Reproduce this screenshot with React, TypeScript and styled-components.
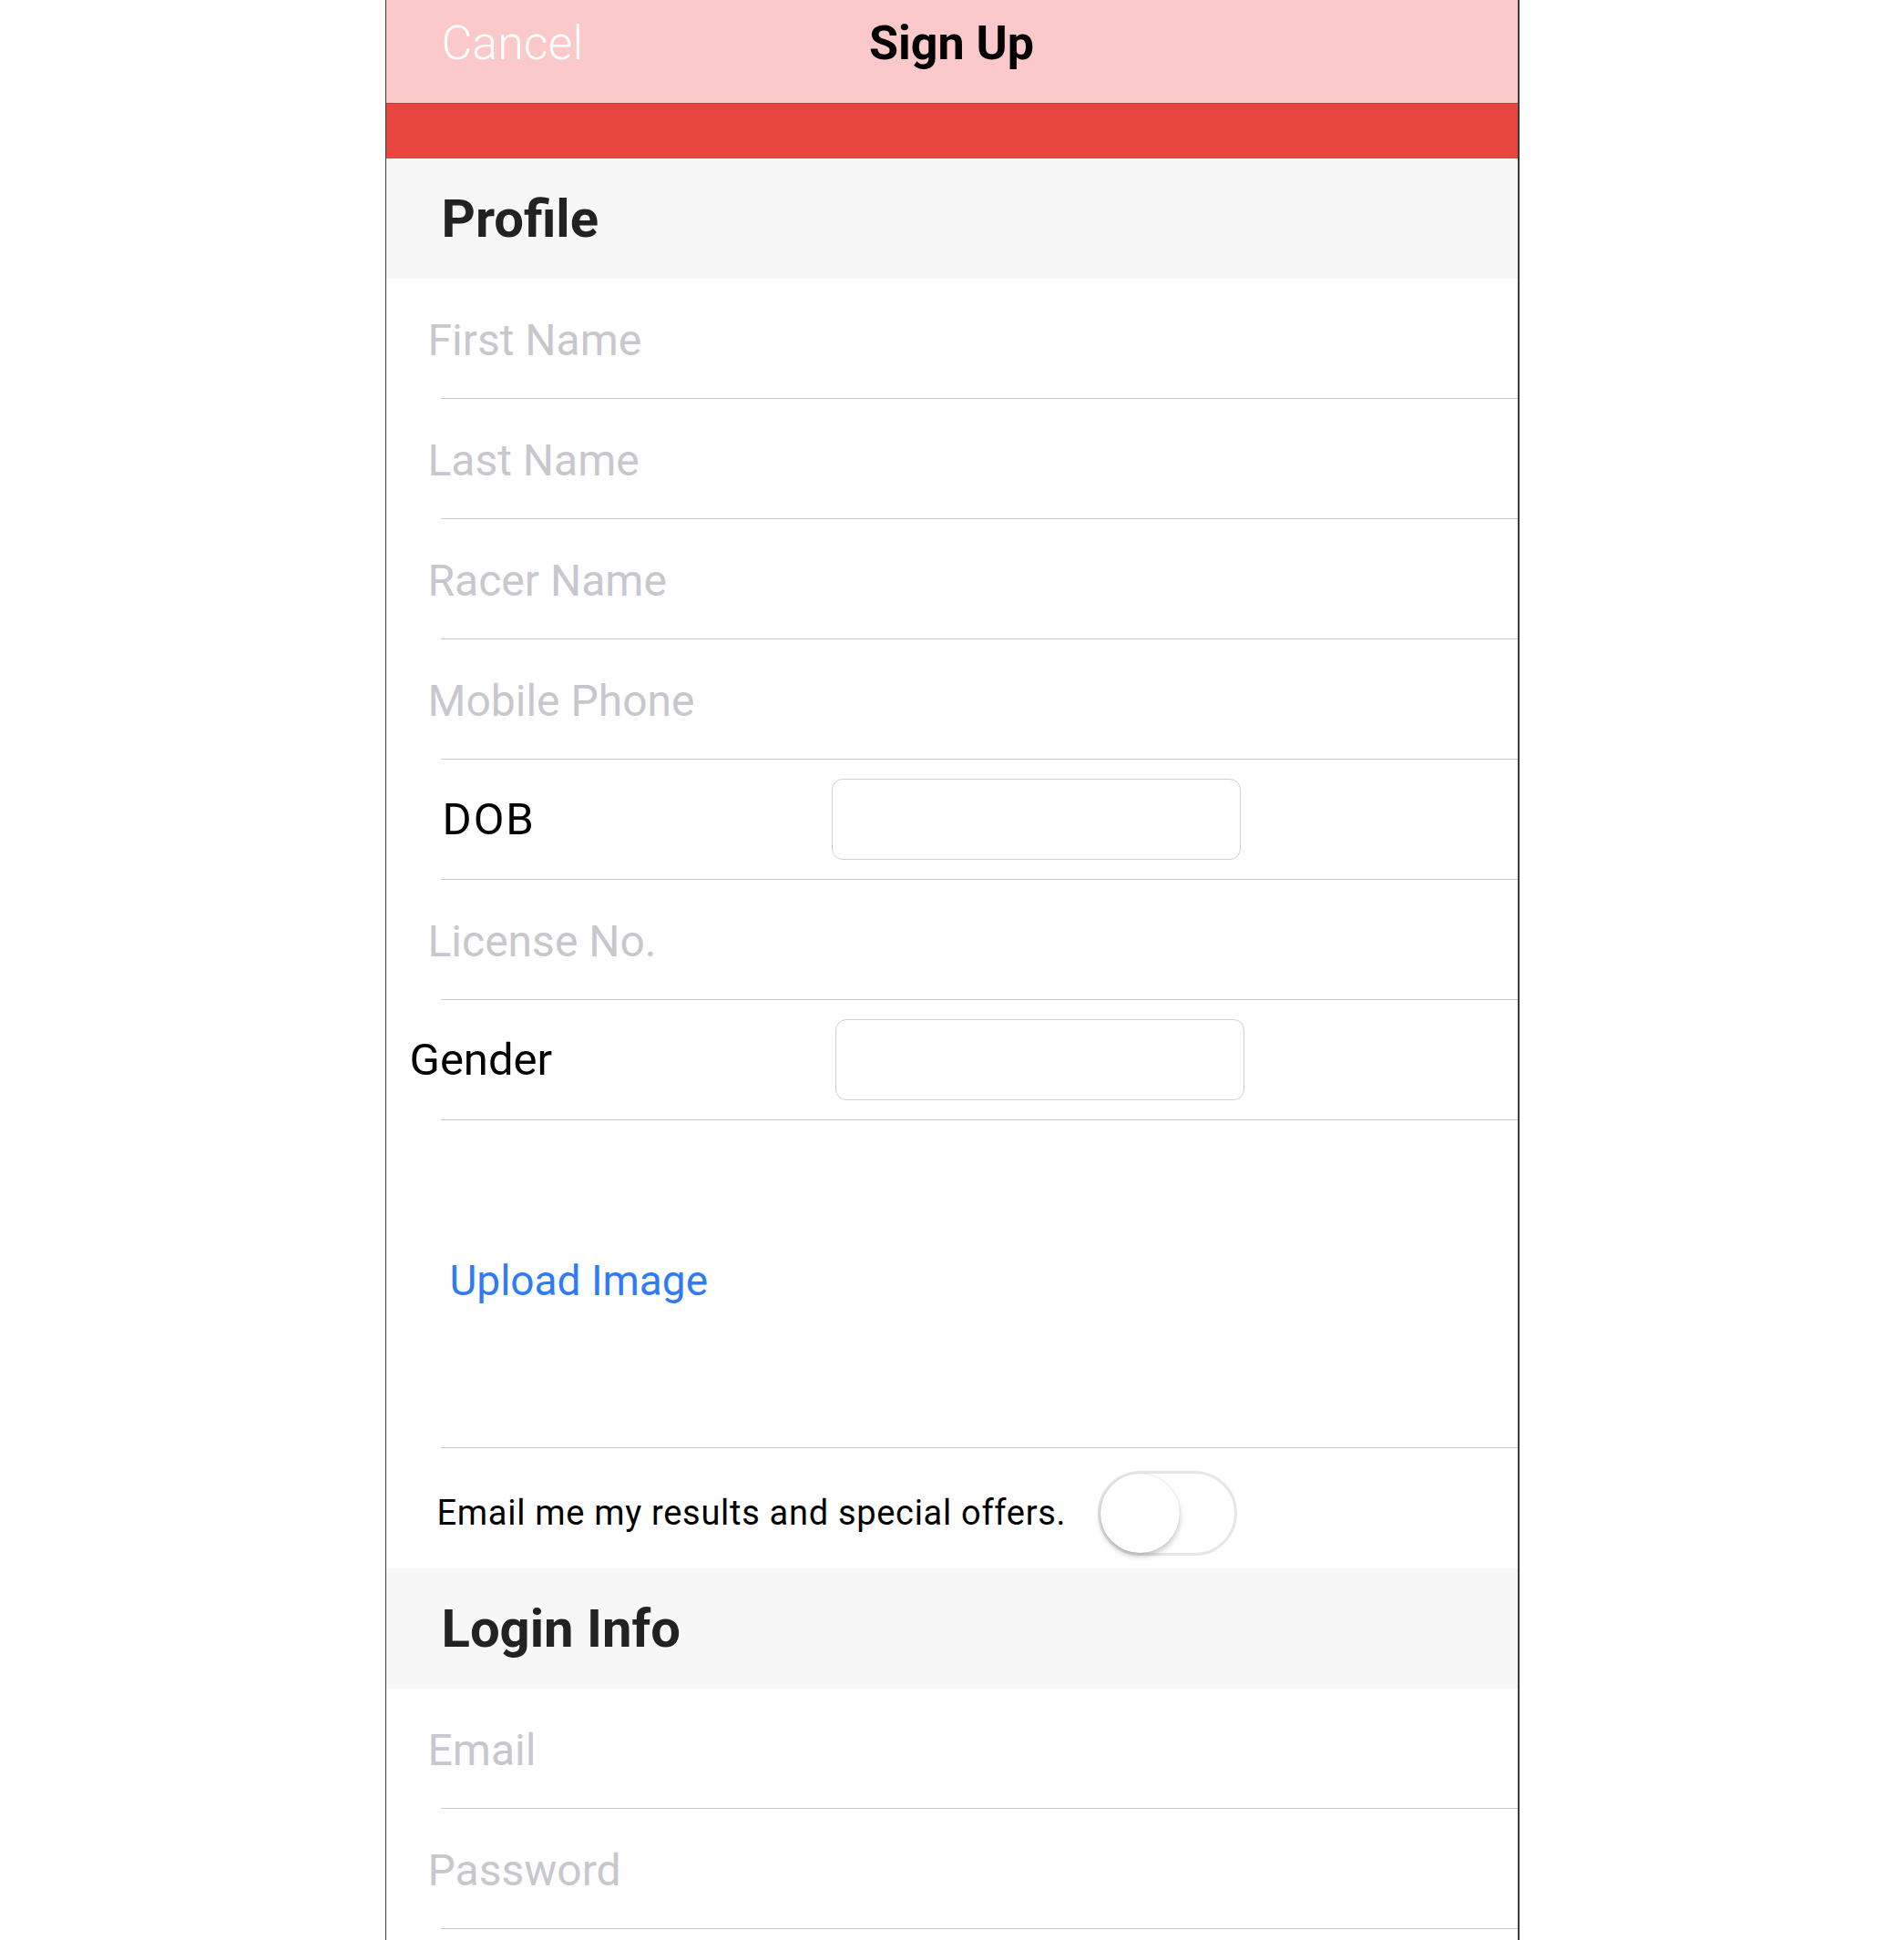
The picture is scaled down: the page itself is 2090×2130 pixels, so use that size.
import styled, {createGlobalStyle} from 'styled-components'

const GlobalStyle = createGlobalStyle`
    html, body {
        margin: 0;
        padding: 0;
        background: #fff;
    }
    body {
        font-family: Roboto, 'Liberation Sans', sans-serif;
    }
`

const profileFields = ['First Name', 'Last Name', 'Racer Name', 'Mobile Phone']
const loginFields = ['Email', 'Password', 'Confirm Password']

const App = () => {
    return (
        <>
            <GlobalStyle />
            <Phone>
                <NavBar>
                    <CancelButton>Cancel</CancelButton>
                    <NavTitle>Sign Up</NavTitle>
                    <span />
                </NavBar>
                <RedStrip />

                <SectionHeader>Profile</SectionHeader>
                {profileFields.map((f) => (
                    <div key={f}>
                        <Row>
                            <TextInput placeholder={f} />
                        </Row>
                        <Divider />
                    </div>
                ))}

                <Row>
                    <Label indent={62} width={427} spacing={2}>
                        DOB
                    </Label>
                    <SelectBox />
                </Row>
                <Divider />

                <Row>
                    <TextInput placeholder="License No." />
                </Row>
                <Divider />

                <Row>
                    <Label indent={26} width={467}>
                        Gender
                    </Label>
                    <SelectBox />
                </Row>
                <Divider />

                <UploadRow>
                    <UploadLink>Upload Image</UploadLink>
                </UploadRow>
                <Divider />

                <ToggleRow>
                    <ToggleText>Email me my results and special offers.</ToggleText>
                    <Switch>
                        <Knob />
                    </Switch>
                </ToggleRow>

                <SectionHeader>Login Info</SectionHeader>
                {loginFields.map((f) => (
                    <div key={f}>
                        <Row>
                            <TextInput placeholder={f} type={f.includes('Password') ? 'password' : 'text'} />
                        </Row>
                        <Divider />
                    </div>
                ))}
            </Phone>
        </>
    )
}

const Phone = styled.div`
    width: 1242px;
    margin: 0 auto;
    border-left: 1px solid #3a3a3a;
    border-right: 2px solid #3a3a3a;
    background: #fff;
    min-height: 2130px;
`

const NavBar = styled.div`
    height: 114px;
    box-sizing: border-box;
    padding: 0 0 18px 61px;
    background: #fcc9ca;
    border-bottom: 1px solid #c23a35;
    display: grid;
    grid-template-columns: 1fr auto 1fr;
    align-items: center;
`

const CancelButton = styled.div`
    color: #fff;
    font-family: Roboto, sans-serif;
    font-weight: 300;
    font-size: 52px;
`

const NavTitle = styled.div`
    color: #000;
    font-family: Roboto, sans-serif;
    font-weight: 700;
    font-size: 52px;
    margin-left: -61px;
`

const RedStrip = styled.div`
    height: 60px;
    background: #e8453f;
`

const SectionHeader = styled.div`
    height: 132px;
    background: #f7f7f7;
    display: flex;
    align-items: center;
    padding-left: 61px;
    color: #222;
    font-family: Roboto, sans-serif;
    font-weight: 700;
    font-size: 58px;
`

const Row = styled.div`
    height: 131px;
    display: flex;
    align-items: center;
`

const Divider = styled.div`
    height: 1px;
    margin-left: 60px;
    background: #c8c7cc;
`

const TextInput = styled.input`
    flex: 1;
    border: none;
    outline: none;
    background: transparent;
    padding: 4px 0 0 46px;
    font-family: Roboto, sans-serif;
    font-size: 48px;
    color: #222;

    &::placeholder {
        color: #c7c7cd;
    }
`

const Label = styled.div<{indent: number; width: number; spacing?: number}>`
    box-sizing: border-box;
    width: ${(p) => p.indent + p.width}px;
    padding-left: ${(p) => p.indent}px;
    letter-spacing: ${(p) => p.spacing ?? 0}px;
    font-family: Roboto, sans-serif;
    font-size: 49px;
    color: #000;
`

const SelectBox = styled.div`
    width: 449px;
    height: 89px;
    box-sizing: border-box;
    border: 1px solid #cfcfcf;
    border-radius: 12px;
    background: #fff;
`

const UploadRow = styled.div`
    height: 359px;
    display: flex;
    align-items: center;
    padding-left: 70px;
    padding-bottom: 8px;
    box-sizing: border-box;
`

const UploadLink = styled.div`
    color: #2f7bf5;
    font-family: Roboto, sans-serif;
    font-size: 46px;
`

const ToggleRow = styled.div`
    height: 132px;
    box-sizing: border-box;
    padding: 10px 0 0 56px;
    display: flex;
    align-items: center;
    gap: 35px;
`

const ToggleText = styled.div`
    font-family: Roboto, sans-serif;
    font-size: 38px;
    letter-spacing: 0.7px;
    color: #000;
`

const Switch = styled.div`
    width: 153px;
    height: 93px;
    box-sizing: border-box;
    border: 3px solid #e6e6e6;
    border-radius: 47px;
    background: #fff;
    display: flex;
    align-items: center;
`

const Knob = styled.div`
    width: 87px;
    height: 87px;
    border-radius: 50%;
    background: #fff;
    box-shadow: 0 4px 6px rgba(0, 0, 0, 0.22), 0 0 1px rgba(0, 0, 0, 0.2);
`

export default App
